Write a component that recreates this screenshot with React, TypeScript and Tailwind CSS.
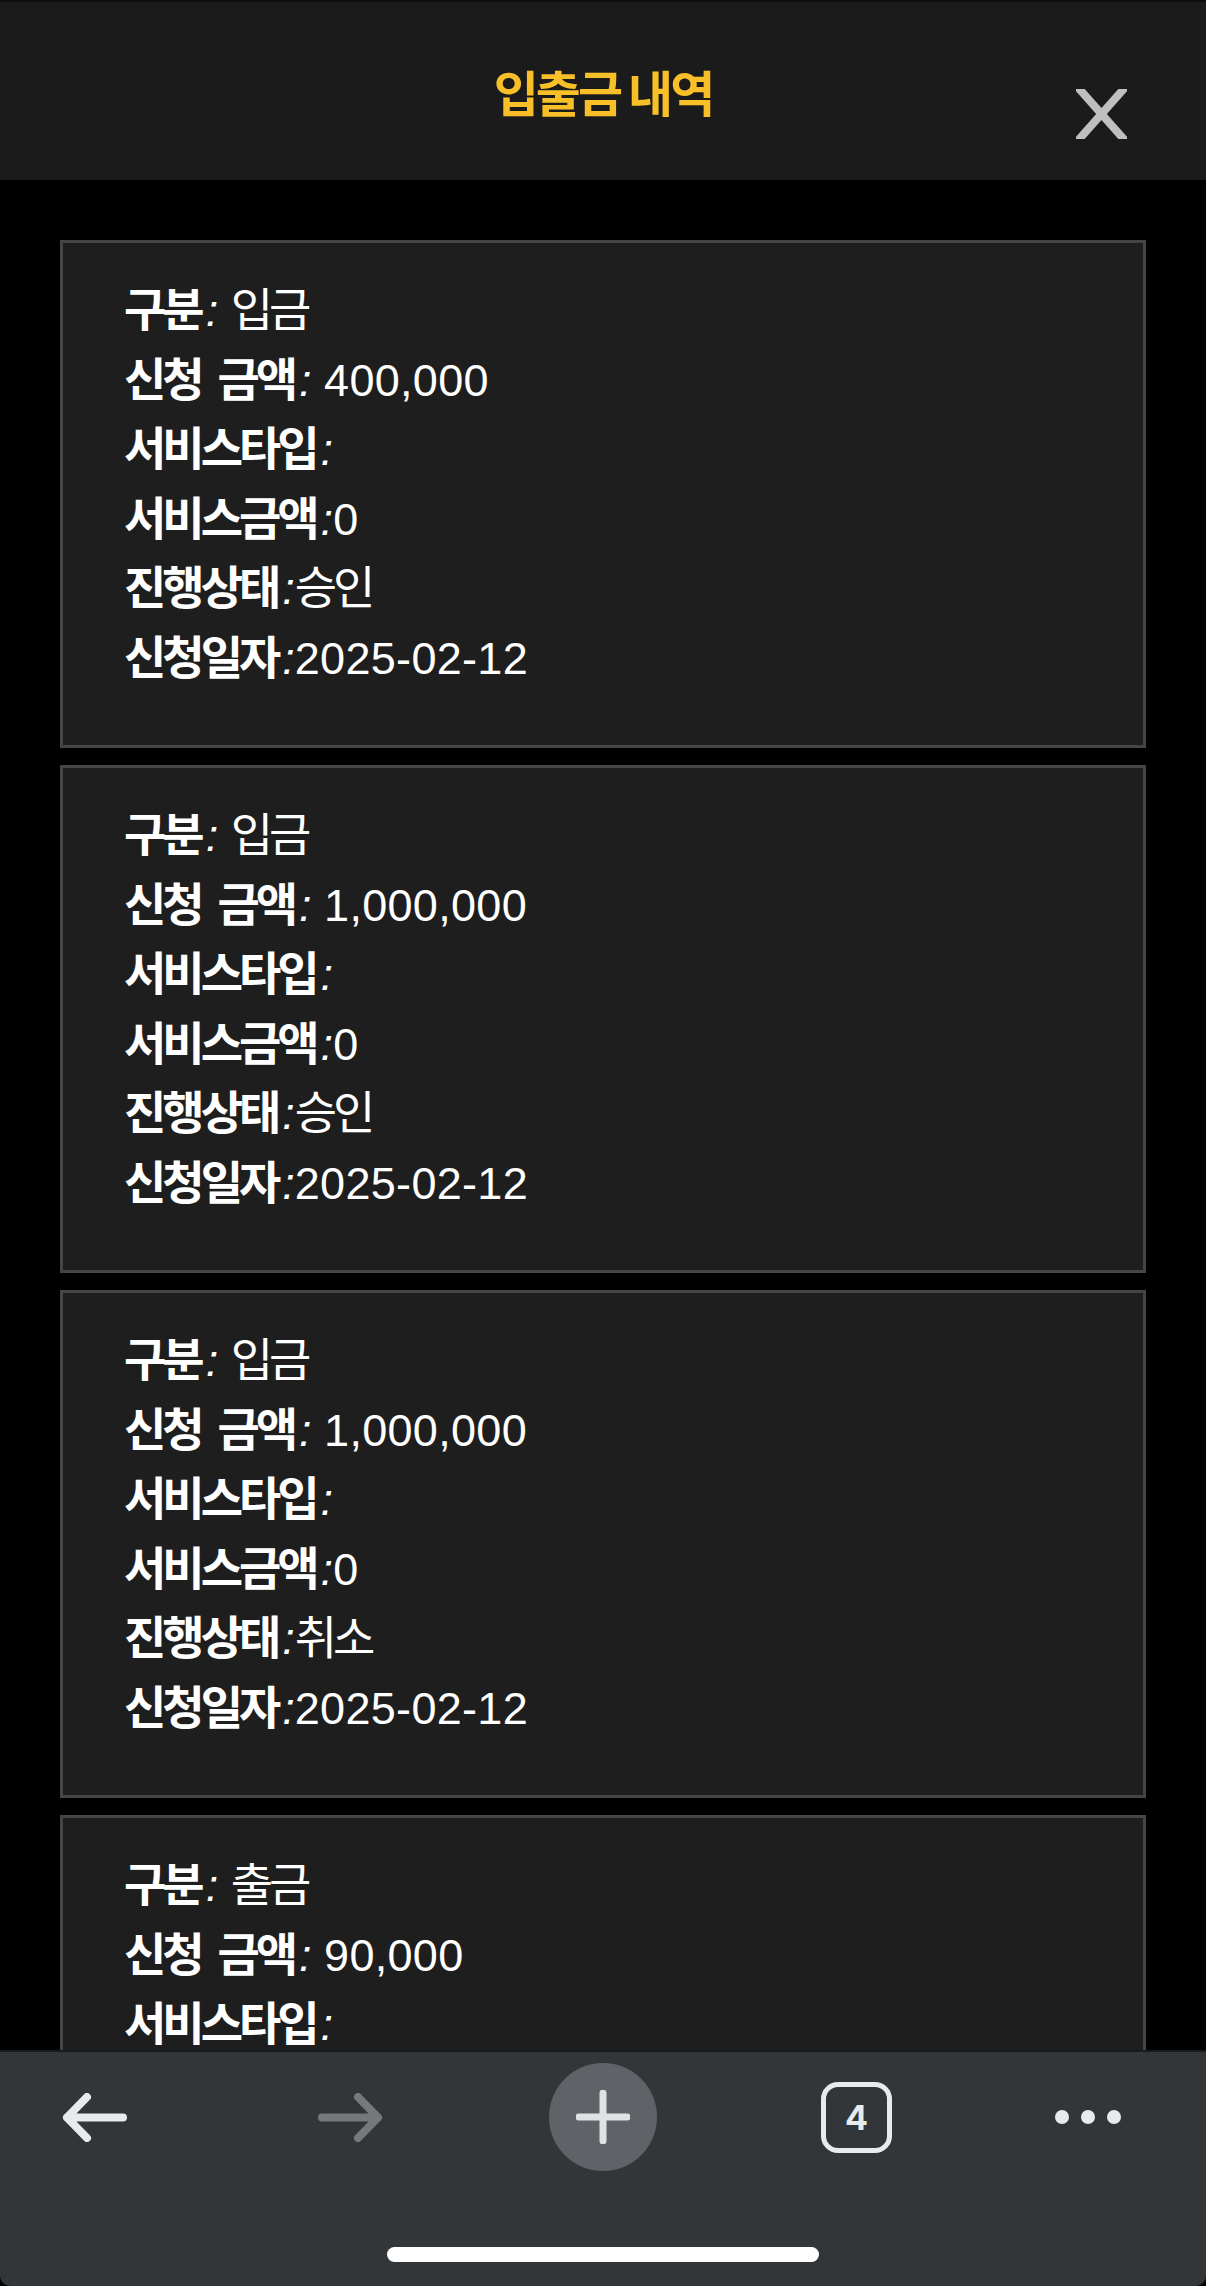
type Entry = {
  kind: string;
  amount: string;
  serviceAmount: string;
  status: string;
  date: string;
};

const entries: Entry[] = [
  { kind: "입금", amount: "400,000", serviceAmount: "0", status: "승인", date: "2025-02-12" },
  { kind: "입금", amount: "1,000,000", serviceAmount: "0", status: "승인", date: "2025-02-12" },
  { kind: "입금", amount: "1,000,000", serviceAmount: "0", status: "취소", date: "2025-02-12" },
  { kind: "출금", amount: "90,000", serviceAmount: "0", status: "승인", date: "2025-02-12" },
];

const hangul = /[가-힣]/;

function Row({ label, value, spaced }: { label: string; value?: string; spaced?: boolean }) {
  return (
    <p className="whitespace-pre">
      <b className="text-[46px] font-bold tracking-[-4px] [word-spacing:8px]">{label}</b>
      <i className="ml-[5px] font-normal">{spaced ? ": " : ":"}</i>
      {value && (
        <span className={hangul.test(value) ? "text-[46px] tracking-[-4px]" : "tracking-[0.3px]"}>
          {value}
        </span>
      )}
    </p>
  );
}

function EntryCard({ entry }: { entry: Entry }) {
  return (
    <div className="h-[508px] shrink-0 border-[3px] border-[#454545] bg-[#1e1e1e] pl-[61px] pt-[33px] text-[45px] leading-[69.5px] text-white">
      <Row label="구분" value={entry.kind} spaced />
      <Row label="신청 금액" value={entry.amount} spaced />
      <Row label="서비스타입" />
      <Row label="서비스금액" value={entry.serviceAmount} />
      <Row label="진행상태" value={entry.status} />
      <Row label="신청일자" value={entry.date} />
    </div>
  );
}

export default function App() {
  return (
    <div className="flex h-[2286px] w-[1206px] flex-col overflow-hidden bg-black font-['Liberation_Sans','Noto_Sans_CJK_KR',sans-serif]">
      {/* === Header === */}
      <header className="grid h-[180px] shrink-0 grid-cols-[1fr_auto_1fr] border-t-2 border-[#0e0e0e] bg-[#1b1b1b]">
        <div />
        <h1 className="self-center font-['Noto_Sans_CJK_KR',sans-serif] text-[49px] font-bold tracking-[-3px] text-[#f8bf29]">
          입출금 내역
        </h1>
        <button className="mr-[79px] mt-[87px] h-[50px] w-[51px] justify-self-end">
          <svg viewBox="0 0 51 50" width="51" height="50">
            <path d="M-2 -6 L53 56 M53 -6 L-2 56" stroke="#bfbfbf" strokeWidth="8" />
          </svg>
        </button>
      </header>

      {/* === List === */}
      <main className="flex flex-1 flex-col gap-[17px] overflow-hidden px-[60px] pt-[60px]">
        {entries.map((entry, i) => (
          <EntryCard key={i} entry={entry} />
        ))}
      </main>

      {/* === Browser toolbar === */}
      <nav className="flex h-[236px] shrink-0 flex-col rounded-b-[10px] border-t-2 border-[#1a1a1a] bg-[#323639]">
        <div className="mt-[11px] flex h-[108px] items-center">
          <div className="ml-[62px] flex w-[66px] justify-center">
            <svg viewBox="0 0 66 49" width="66" height="49">
              <path
                d="M25 4 L5 24.5 L25 45 M5 24.5 H61"
                fill="none"
                stroke="#e8eaed"
                strokeWidth="8"
                strokeLinecap="round"
                strokeLinejoin="round"
              />
            </svg>
          </div>
          <div className="ml-[189px] flex w-[66px] justify-center">
            <svg viewBox="0 0 66 49" width="66" height="49">
              <path
                d="M41 4 L61 24.5 L41 45 M61 24.5 H5"
                fill="none"
                stroke="#77787a"
                strokeWidth="8"
                strokeLinecap="round"
                strokeLinejoin="round"
              />
            </svg>
          </div>
          <div className="ml-[166px] flex h-[108px] w-[108px] items-center justify-center rounded-full bg-[#5f6368]">
            <svg viewBox="0 0 54 54" width="54" height="54">
              <path d="M27 3 V51 M3 27 H51" stroke="#dfe1e5" strokeWidth="7" strokeLinecap="round" />
            </svg>
          </div>
          <div className="ml-[164px] flex h-[71px] w-[71px] items-center justify-center rounded-[17px] border-[5px] border-[#e8eaed] font-['Inter',sans-serif] text-[34px] font-bold text-[#e8eaed]">
            4
          </div>
          <div className="ml-[163px] flex gap-[12px]">
            <span className="h-[14px] w-[14px] rounded-full bg-[#e8eaed]" />
            <span className="h-[14px] w-[14px] rounded-full bg-[#e8eaed]" />
            <span className="h-[14px] w-[14px] rounded-full bg-[#e8eaed]" />
          </div>
        </div>
        <div className="mt-[76px] h-[15px] w-[432px] self-center rounded-full bg-white" />
      </nav>
    </div>
  );
}
